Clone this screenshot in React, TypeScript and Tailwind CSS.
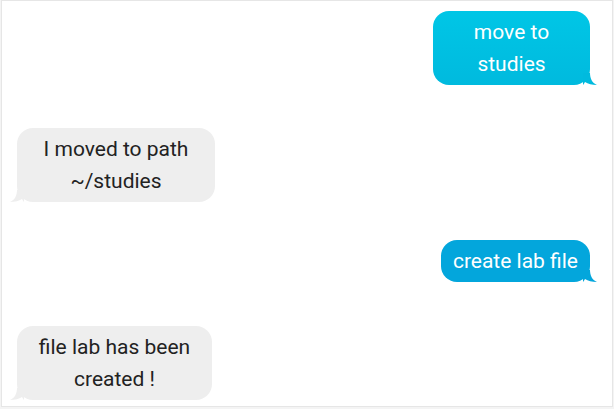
const messages = [
  { id: 1, text: 'move to studies', mine: true, width: 'w-[157px]', bg: 'bg-gradient-to-b from-[#00c6e6] to-[#00bade]', tail: '#00bade', mt: 'mt-[10px]' },
  { id: 2, text: 'I moved to path ~/studies', mine: false, width: 'w-[198px]', bg: 'bg-[#eeeeee]', tail: '#eeeeee', mt: 'mt-[43px]' },
  { id: 3, text: 'create lab file', mine: true, width: '', bg: 'bg-[#03a6dc]', tail: '#03a6dc', mt: 'mt-[38px]' },
  { id: 4, text: 'file lab has been created !', mine: false, width: 'w-[195px]', bg: 'bg-[#eeeeee]', tail: '#eeeeee', mt: 'mt-[44px]' },
];

function Tail({ color, mine }: { color: string; mine: boolean }) {
  // little curl at the bottom corner of the bubble
  return (
    <svg
      width="14"
      height="12"
      viewBox="0 0 14 12"
      className={`absolute bottom-0 ${mine ? '-right-[7px]' : '-left-[7px] -scale-x-100'}`}
    >
      <path d="M0 0 L7 0 C7 5 9 10 14 12 C9 12 5 11 2 9 C1 11 0 12 0 12 Z" fill={color} />
    </svg>
  );
}

export default function App() {
  return (
    <div className="w-[614px] h-[409px] bg-[#f4f4f4]" style={{ fontFamily: 'Roboto, "Noto Sans", sans-serif' }}>
      <div className="ml-px w-[612px] h-[407px] bg-white border border-[#e6e6e6] flex flex-col">
        {messages.map((m) => (
          <div key={m.id} className={`flex ${m.mine ? 'justify-end pr-[22px]' : 'justify-start pl-[15px]'} ${m.mt}`}>
            <div
              className={`relative ${m.width} ${m.bg} rounded-[16px] px-[12px] py-[5px] text-[21px] leading-[32px] text-center ${
                m.mine ? 'text-white' : 'text-[#222222]'
              }`}
            >
              {m.text}
              <Tail color={m.tail} mine={m.mine} />
            </div>
          </div>
        ))}
      </div>
    </div>
  );
}
